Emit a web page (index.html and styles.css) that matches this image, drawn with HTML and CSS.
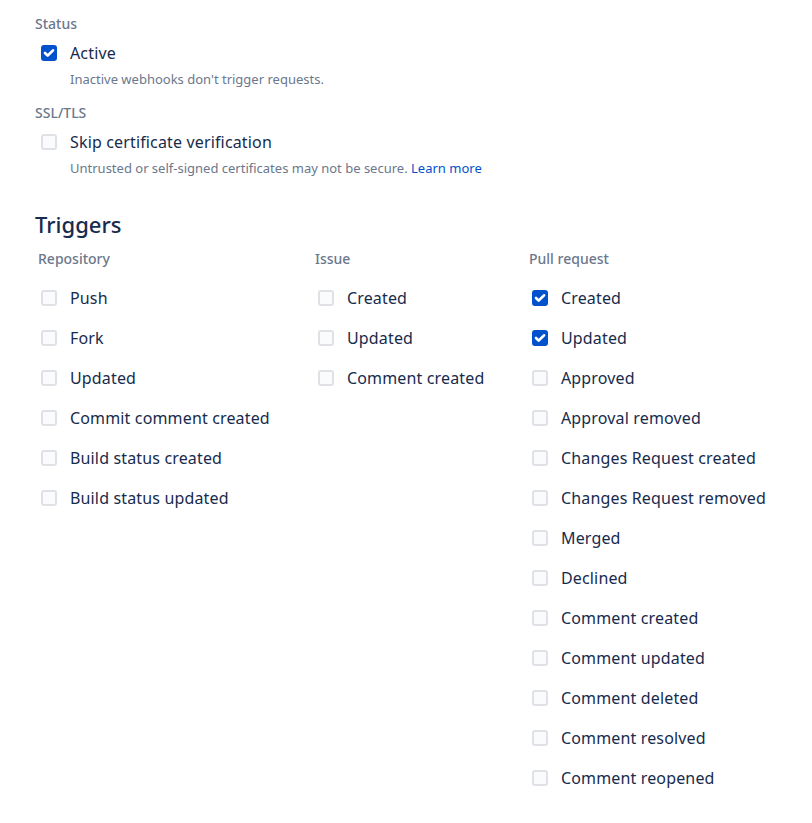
FILE: index.html
```html
<!DOCTYPE html>
<html>
<head>
<meta charset="utf-8">
<link rel="stylesheet" href="styles.css">
</head>
<body>
<main class="page">
  <div class="field-label">Status</div>
  <label class="row"><span class="cb checked"><svg viewBox="6 6 12 12" width="16" height="16"><path fill="#fff" d="M9.707 11.293a1 1 0 1 0-1.414 1.414l2 2a1 1 0 0 0 1.414 0l4-4a1 1 0 1 0-1.414-1.414L11 12.586l-1.293-1.293z"/></svg></span><span class="text">Active</span></label>
  <div class="help">Inactive webhooks don't trigger requests.</div>

  <div class="field-label second">SSL/TLS</div>
  <label class="row"><span class="cb"></span><span class="text">Skip certificate verification</span></label>
  <div class="help">Untrusted or self-signed certificates may not be secure. <a class="link" href="#">Learn more</a></div>

  <h2 class="heading">Triggers</h2>
  <div class="triggers">
    <div class="col col-repo">
      <div class="col-label">Repository</div>
      <label class="trow"><span class="cb"></span><span class="text">Push</span></label>
      <label class="trow"><span class="cb"></span><span class="text">Fork</span></label>
      <label class="trow"><span class="cb"></span><span class="text">Updated</span></label>
      <label class="trow"><span class="cb"></span><span class="text">Commit comment created</span></label>
      <label class="trow"><span class="cb"></span><span class="text">Build status created</span></label>
      <label class="trow"><span class="cb"></span><span class="text">Build status updated</span></label>
    </div>
    <div class="col col-issue">
      <div class="col-label">Issue</div>
      <label class="trow"><span class="cb"></span><span class="text">Created</span></label>
      <label class="trow"><span class="cb"></span><span class="text">Updated</span></label>
      <label class="trow"><span class="cb"></span><span class="text">Comment created</span></label>
    </div>
    <div class="col col-pr">
      <div class="col-label">Pull request</div>
      <label class="trow"><span class="cb checked"><svg viewBox="6 6 12 12" width="16" height="16"><path fill="#fff" d="M9.707 11.293a1 1 0 1 0-1.414 1.414l2 2a1 1 0 0 0 1.414 0l4-4a1 1 0 1 0-1.414-1.414L11 12.586l-1.293-1.293z"/></svg></span><span class="text">Created</span></label>
      <label class="trow"><span class="cb checked"><svg viewBox="6 6 12 12" width="16" height="16"><path fill="#fff" d="M9.707 11.293a1 1 0 1 0-1.414 1.414l2 2a1 1 0 0 0 1.414 0l4-4a1 1 0 1 0-1.414-1.414L11 12.586l-1.293-1.293z"/></svg></span><span class="text">Updated</span></label>
      <label class="trow"><span class="cb"></span><span class="text">Approved</span></label>
      <label class="trow"><span class="cb"></span><span class="text">Approval removed</span></label>
      <label class="trow"><span class="cb"></span><span class="text">Changes Request created</span></label>
      <label class="trow"><span class="cb"></span><span class="text">Changes Request removed</span></label>
      <label class="trow"><span class="cb"></span><span class="text">Merged</span></label>
      <label class="trow"><span class="cb"></span><span class="text">Declined</span></label>
      <label class="trow"><span class="cb"></span><span class="text">Comment created</span></label>
      <label class="trow"><span class="cb"></span><span class="text">Comment updated</span></label>
      <label class="trow"><span class="cb"></span><span class="text">Comment deleted</span></label>
      <label class="trow"><span class="cb"></span><span class="text">Comment resolved</span></label>
      <label class="trow"><span class="cb"></span><span class="text">Comment reopened</span></label>
    </div>
  </div>
</main>
</body>
</html>
```
FILE: styles.css
```css
html, body {
  margin: 0;
  padding: 0;
  background: #ffffff;
}
body {
  font-family: "Noto Sans", "Open Sans", sans-serif;
  color: #172B4D;
}
.page {
  padding: 14px 0 0 35px;
}
.field-label {
  font-size: 14px;
  line-height: 20px;
  color: #6B778C;
  font-weight: 500;
}
.field-label.second {
  margin-top: 14px;
}
.row {
  display: flex;
  align-items: center;
  height: 24px;
  margin-top: 7px;
  padding-left: 6px;
}
.cb {
  flex: none;
  box-sizing: border-box;
  width: 16px;
  height: 16px;
  border: 2px solid #DFE1E6;
  background: #FAFBFC;
  border-radius: 3px;
  display: flex;
  align-items: center;
  justify-content: center;
}
.cb.checked {
  border: none;
  background: #0052CC;
}
.cb svg {
  display: block;
}
.text {
  margin-left: 13px;
  font-size: 16px;
  line-height: 24px;
  letter-spacing: 0.15px;
  color: #172B4D;
}
.help {
  margin-top: 4px;
  padding-left: 35px;
  font-size: 13px;
  line-height: 20px;
  color: #6B778C;
}
.link {
  color: #0052CC;
  text-decoration: none;
}
.heading {
  margin: 32px 0 0 0;
  font-size: 22px;
  line-height: 28px;
  font-weight: 500;
  color: #172B4D;
}
.triggers {
  display: grid;
  grid-template-columns: 277px 214px auto;
  margin: 11px 0 0 3px;
}
.col-label {
  font-size: 14px;
  line-height: 20px;
  color: #6B778C;
  font-weight: 500;
  margin-bottom: 9px;
}
.trow {
  display: flex;
  align-items: center;
  height: 40px;
  padding-left: 3px;
}
```
